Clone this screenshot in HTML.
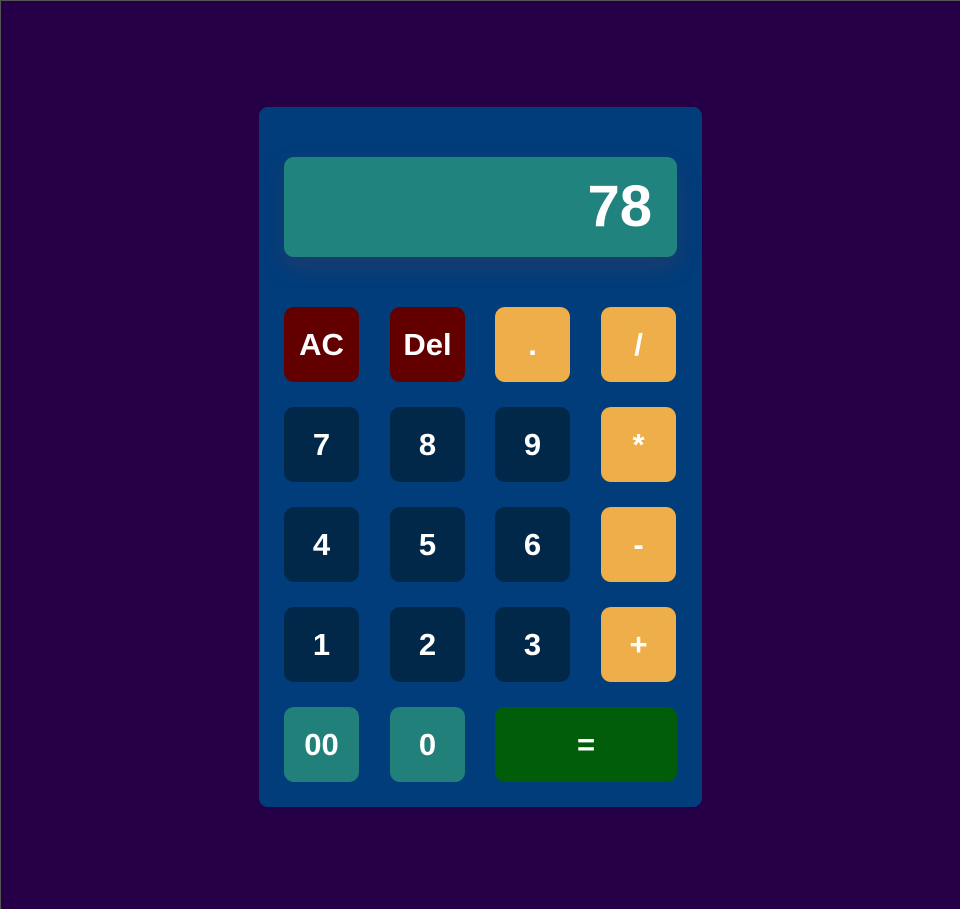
<!DOCTYPE html>
<html><head><style>
html,body{margin:0;padding:0}
body{width:959px;height:908px;background:#250046;border-top:1px solid #555;border-left:1px solid #555;position:relative;overflow:hidden;font-family:"Liberation Sans",sans-serif;font-weight:bold;color:#fff}
.calc{position:absolute;left:258px;top:106px;width:443px;height:700px;background:#023d7b;border-radius:9px}
.disp{position:absolute;left:25px;top:50px;width:393px;height:100px;background:#21837d;border-radius:10px;box-shadow:0 10px 20px rgba(60,60,90,.45);text-align:right;box-sizing:border-box;padding-right:25px;line-height:100px;font-size:58px}
.b{position:absolute;width:75px;height:75px;border-radius:10px;text-align:center;line-height:75px;font-size:31px}
.r{background:#620000}.o{background:#eeae4a}.n{background:#012849}.t{background:#22807a}.g{background:#015d09}
</style></head><body>
<div class="calc">
<div class="disp">78</div>
<div class="b r" style="left:25px;top:200px">AC</div>
<div class="b r" style="left:131px;top:200px">Del</div>
<div class="b o" style="left:236px;top:200px">.</div>
<div class="b o" style="left:342px;top:200px">/</div>
<div class="b n" style="left:25px;top:300px">7</div>
<div class="b n" style="left:131px;top:300px">8</div>
<div class="b n" style="left:236px;top:300px">9</div>
<div class="b o" style="left:342px;top:300px">*</div>
<div class="b n" style="left:25px;top:400px">4</div>
<div class="b n" style="left:131px;top:400px">5</div>
<div class="b n" style="left:236px;top:400px">6</div>
<div class="b o" style="left:342px;top:400px">-</div>
<div class="b n" style="left:25px;top:500px">1</div>
<div class="b n" style="left:131px;top:500px">2</div>
<div class="b n" style="left:236px;top:500px">3</div>
<div class="b o" style="left:342px;top:500px">+</div>
<div class="b t" style="left:25px;top:600px">00</div>
<div class="b t" style="left:131px;top:600px">0</div>
<div class="b g" style="left:236px;top:600px;width:182px">=</div>
</div>
</body></html>
